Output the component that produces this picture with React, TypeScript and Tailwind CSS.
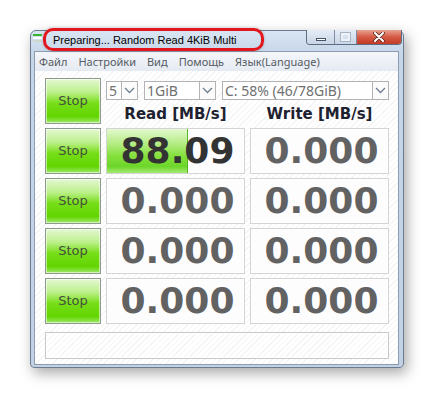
import { ReactNode } from 'react';

const hatch =
  'bg-[repeating-linear-gradient(135deg,#ffffff_0px,#ffffff_3px,#f4f4f4_3px,#f4f4f4_4px)]';

function Chevron() {
  return (
    <svg width="11" height="7" viewBox="0 0 11 7">
      <polyline points="1,1 5.5,5.5 10,1" fill="none" stroke="#6f7d90" strokeWidth="1.3" />
    </svg>
  );
}

function Select({ width, children }: { width: string; children: ReactNode }) {
  return (
    <div className={`${width} h-[19px] flex border border-[#b3b3b3] bg-white`}>
      <div className="flex-1 flex items-center pl-[2px] text-[14px] leading-none text-[#707070] whitespace-nowrap overflow-hidden">
        {children}
      </div>
      <div className="w-[16px] flex items-center justify-center border-l border-[#b3b3b3] bg-[#fbfbfb]">
        <Chevron />
      </div>
    </div>
  );
}

function StopButton() {
  return (
    <button className="w-[56px] h-[46px] shrink-0 border border-[#8f9a8f] bg-[linear-gradient(#e4f8d2,#bdf08c_30%,#76de18_55%,#62d500_85%,#9fe86a)] shadow-[inset_0_0_0_1px_rgba(255,255,255,0.55)] font-['DejaVu_Sans',sans-serif] text-[13px] text-[#44503a]">
      Stop
    </button>
  );
}

function Cell({ value, bar, dark }: { value: string; bar?: boolean; dark?: boolean }) {
  return (
    <div className="relative w-[139px] h-[46px] flex items-center justify-center border border-[#d4d4d4] bg-[#fdfdfd] shadow-[inset_0_0_0_1px_#ffffff]">
      {bar && (
        <div className="absolute left-0 top-0 bottom-0 w-[81px] border-r border-[#55b91c] bg-[linear-gradient(#e3f8cf,#b2ec80_35%,#86e03e_60%,#6dd62a_85%,#a4ea74)]" />
      )}
      <span
        className={`relative pl-[4px] font-['DejaVu_Sans',sans-serif] font-bold text-[36px] leading-none ${
          dark ? 'text-[#333333]' : 'text-[#626262]'
        }`}
      >
        {value}
      </span>
    </div>
  );
}

export default function App() {
  const rows = [
    { read: '88.09', write: '0.000', bar: true },
    { read: '0.000', write: '0.000' },
    { read: '0.000', write: '0.000' },
    { read: '0.000', write: '0.000' },
  ];

  return (
    <div className="w-[434px] h-[399px] bg-white pt-[30px] pl-[30px] font-['Noto_Sans',sans-serif]">
      <div className="w-[374px] h-[338px] flex flex-col rounded-t-[6px] rounded-b-[4px] border border-[#6c7b90] bg-[linear-gradient(#d9e5f3,#c6d6e9_22px,#c2d1e4)] shadow-[3px_5px_14px_rgba(0,0,0,0.35)] pl-[3px] pr-[4px] pb-[2px]">
        {/* title bar */}
        <div className="relative h-[20px] flex items-start">
          <svg width="9" height="8" viewBox="0 0 9 8" className="mt-[3px] ml-[-1px]">
            <rect x="0" y="0" width="9" height="2" fill="#37b431" />
            <rect x="0" y="3" width="9" height="2" fill="#ffffff" />
            <rect x="0" y="6" width="9" height="2" fill="#cfd8cf" />
          </svg>
          <span className="ml-[11px] mt-[1px] font-['Liberation_Sans',sans-serif] text-[11px] leading-[16px] text-black whitespace-nowrap">
            Preparing... Random Read 4KiB Multi
          </span>
          <div className="absolute left-[9px] top-[-3px] w-[221px] h-[23px] rounded-[10px] border-[3px] border-[#e3161d] shadow-[0_0_3px_rgba(0,0,0,0.25)]" />
          <div className="ml-auto mr-[-3px] mt-[-1px] flex h-[15px] border border-t-0 border-[#5c6c82] rounded-b-[4px] overflow-hidden">
            <div className="w-[28px] flex items-end justify-center pb-[3px] bg-[linear-gradient(#e4ecf6,#c9d6e6)] border-r border-[#7d8ca1]">
              <div className="w-[10px] h-[3px] bg-white border border-[#46546a]" />
            </div>
            <div className="w-[22px] flex items-center justify-center bg-[linear-gradient(#e4ecf6,#c9d6e6)] border-r border-[#7d8ca1]">
              <div className="w-[9px] h-[8px] border-2 border-[#eef2f7] outline outline-1 outline-[#a9b5c5]" />
            </div>
            <div className="w-[44px] flex items-center justify-center bg-[linear-gradient(#e8a291,#d45a44_50%,#c43a25)]">
              <svg width="12" height="10" viewBox="0 0 12 10">
                <path d="M2 1 L10 9 M10 1 L2 9" stroke="#5a2a22" strokeWidth="3.6" strokeLinecap="round" />
                <path d="M2 1 L10 9 M10 1 L2 9" stroke="#ffffff" strokeWidth="2" strokeLinecap="round" />
              </svg>
            </div>
          </div>
        </div>

        {/* client */}
        <div className="flex-1 flex flex-col border border-[#8e9cb1] bg-white">
          <div className="h-[19px] flex items-center gap-[11px] pl-[4px] bg-[linear-gradient(#f4f6fa,#e5eaf2)] text-[11px] leading-none text-[#555b63]">
            <span>Файл</span>
            <span>Настройки</span>
            <span>Вид</span>
            <span>Помощь</span>
            <span>Язык(Language)</span>
          </div>

          <div className={`flex-1 flex flex-col pt-[7px] pl-[10px] pr-[9px] ${hatch}`}>
            <div className="flex flex-col gap-[4px]">
              <div className="flex gap-[5px] h-[46px]">
                <StopButton />
                <div className="flex flex-col">
                  <div className="flex gap-[6px] mt-[3px]">
                    <Select width="w-[32px]">5</Select>
                    <Select width="w-[72px]">1GiB</Select>
                    <Select width="w-[167px]">C: 58% (46/78GiB)</Select>
                  </div>
                  <div className="flex gap-[5px] mt-[4px] h-[20px] items-center font-['DejaVu_Sans',sans-serif] font-bold text-[15px] leading-none text-[#1e2230]">
                    <div className="w-[139px] text-center">Read [MB/s]</div>
                    <div className="w-[139px] text-center">Write [MB/s]</div>
                  </div>
                </div>
              </div>

              {rows.map((r, i) => (
                <div key={i} className="flex gap-[5px]">
                  <StopButton />
                  <Cell value={r.read} bar={r.bar} dark={r.bar} />
                  <Cell value={r.write} />
                </div>
              ))}
            </div>

            <div className="mt-[8px] h-[27px] border border-[#c8c8c8] shadow-[inset_0_0_0_1px_#ffffff]" />
          </div>
        </div>
      </div>
    </div>
  );
}
